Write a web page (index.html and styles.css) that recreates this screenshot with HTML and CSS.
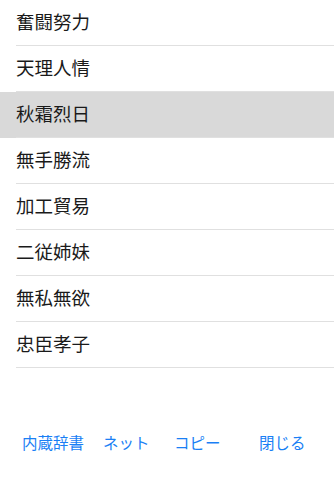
FILE: index.html
```
<!DOCTYPE html>
<html lang="ja">
<head>
<meta charset="utf-8">
<link rel="stylesheet" href="styles.css">
</head>
<body>
<div class="screen">
  <ul class="list">
    <li class="row"><span class="cell">奮闘努力</span></li>
    <li class="row"><span class="cell">天理人情</span></li>
    <li class="row selected"><span class="cell">秋霜烈日</span></li>
    <li class="row"><span class="cell">無手勝流</span></li>
    <li class="row"><span class="cell">加工貿易</span></li>
    <li class="row"><span class="cell">二従姉妹</span></li>
    <li class="row"><span class="cell">無私無欲</span></li>
    <li class="row"><span class="cell">忠臣孝子</span></li>
  </ul>
  <div class="toolbar">
    <span class="btn b1">内蔵辞書</span>
    <span class="btn b2">ネット</span>
    <span class="btn b3">コピー</span>
    <span class="btn b4">閉じる</span>
  </div>
</div>
</body>
</html>
```
FILE: styles.css
```
html, body {
  margin: 0;
  padding: 0;
  background: #ffffff;
}
body {
  font-family: "Noto Sans CJK JP", "Noto Sans", sans-serif;
}
.screen {
  width: 334px;
  height: 480px;
  display: flex;
  flex-direction: column;
}
.list {
  list-style: none;
  margin: 0;
  padding: 0;
}
.row {
  display: flex;
  padding-left: 16px;
}
.row.selected {
  background: #d9d9d9;
}
.cell {
  flex: 1;
  height: 46px;
  box-sizing: border-box;
  border-bottom: 1px solid #e0e0e0;
  padding-bottom: 3px;
  display: flex;
  align-items: center;
  font-size: 18.5px;
  color: #1a1a1a;
  line-height: 1;
}
.toolbar {
  margin-top: auto;
  height: 74px;
  display: flex;
  align-items: center;
  padding-left: 22px;
  padding-top: 0;
  box-sizing: border-box;
}
.btn {
  font-size: 15.5px;
  color: #1a7ff5;
  line-height: 1;
}
.b2 { margin-left: 19px; }
.b3 { margin-left: 24.5px; }
.b4 { margin-left: 38.5px; }
```
